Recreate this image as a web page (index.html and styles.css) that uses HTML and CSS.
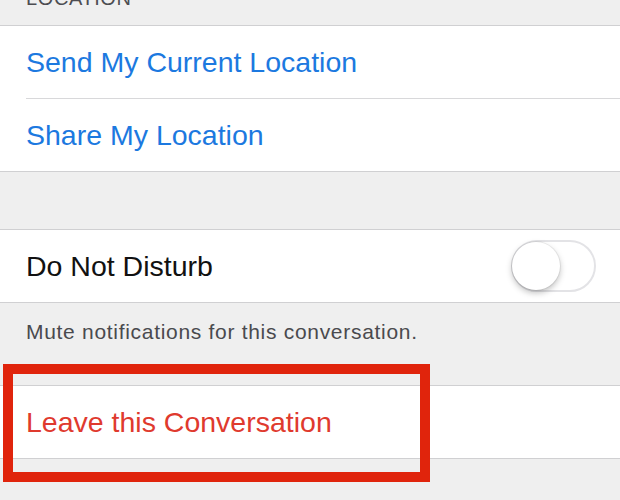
FILE: index.html
```html
<!DOCTYPE html>
<html lang="en">
<head>
    <meta charset="UTF-8">
    <meta name="viewport" content="width=device-width, initial-scale=1.0">
    <title>Details</title>
    <link rel="stylesheet" href="styles.css">
</head>
<body>
    <div class="section-header">LOCATION</div>
    <div class="group">
        <div class="cell link">Send My Current Location</div>
        <div class="cell link">Share My Location</div>
    </div>

    <div class="spacer"></div>

    <div class="group">
        <div class="cell toggle-cell">
            <span>Do Not Disturb</span>
            <div class="switch"><div class="knob"></div></div>
        </div>
    </div>
    <div class="footer-note">Mute notifications for this conversation.</div>

    <div class="group leave-group">
        <div class="cell danger">Leave this Conversation</div>
        <div class="highlight"></div>
    </div>
    <div class="bottom-space"></div>
</body>
</html>
```

FILE: styles.css
```css
body {
    font-family: "Liberation Sans", Arial, sans-serif;
    background-color: #efefef;
    margin: 0;
    padding: 0;
}

.section-header {
    margin-top: -12px;
    height: 37px;
    padding: 0 26px;
    font-size: 20px;
    line-height: 20px;
    letter-spacing: 0.6px;
    color: #4d4d52;
}

.group {
    background-color: #fff;
    border-top: 1px solid #d0d0d2;
    border-bottom: 1px solid #d0d0d2;
}

.cell {
    height: 72px;
    margin-left: 26px;
    padding-right: 24px;
    display: flex;
    align-items: center;
    font-size: 28.5px;
    color: #111;
}

.cell + .cell {
    border-top: 1px solid #d8d8da;
}

.link {
    color: #1c79e0;
}

.spacer {
    height: 57px;
}

.toggle-cell {
    justify-content: space-between;
}

.switch {
    width: 81px;
    height: 48px;
    border: 2px solid #e3e3e6;
    border-radius: 26px;
    background-color: #fff;
    position: relative;
}

.knob {
    position: absolute;
    left: -1px;
    top: 0;
    width: 48px;
    height: 48px;
    border-radius: 50%;
    background-color: #fff;
    box-shadow: 0 3px 6px rgba(0, 0, 0, 0.25), 0 0 0 1px rgba(0, 0, 0, 0.06);
}

.footer-note {
    height: 82px;
    padding: 17px 26px 0;
    box-sizing: border-box;
    font-size: 21px;
    letter-spacing: 0.7px;
    color: #4a4a4e;
}

.leave-group {
    position: relative;
}

.danger {
    color: #df3a2e;
}

.highlight {
    position: absolute;
    left: 3px;
    top: -22px;
    width: 427px;
    height: 118px;
    box-sizing: border-box;
    border: 10px solid #e0240c;
}

.bottom-space {
    height: 60px;
}
```
